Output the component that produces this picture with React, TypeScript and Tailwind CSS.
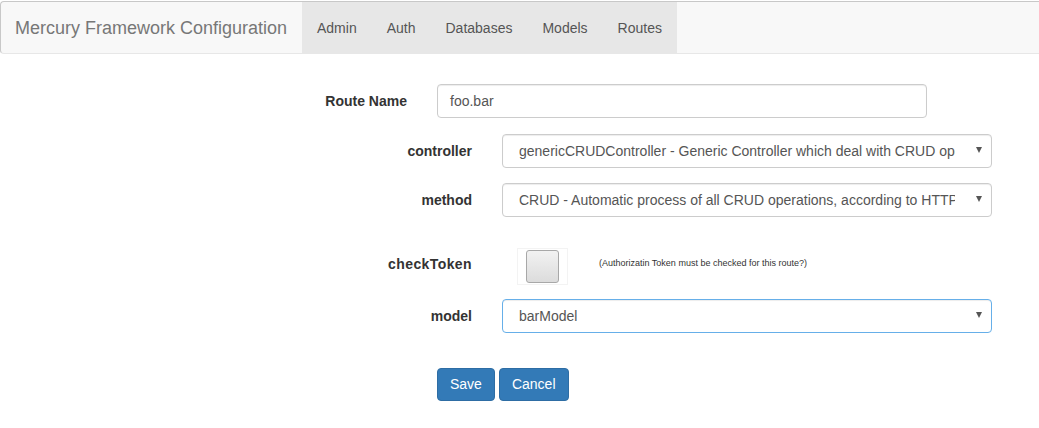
import type { ReactNode } from "react";

const navItems = ["Admin", "Auth", "Databases", "Models", "Routes"];

const controlBase =
  "h-[34px] w-[490px] rounded-[4px] border bg-white text-[14px] text-[#555] shadow-[inset_0_1px_1px_rgba(0,0,0,0.075)]";

function Label({ width, children, spaced }: { width: string; children: ReactNode; spaced?: boolean }) {
  return (
    <label
      className={`${width} shrink-0 pr-[30px] text-right text-[14px] font-bold text-[#333] ${spaced ? "pb-[5px] tracking-[0.4px]" : ""}`}
    >
      {children}
    </label>
  );
}

function FakeSelect({ value, focused }: { value: string; focused?: boolean }) {
  return (
    <div
      className={`${controlBase} relative flex items-center pl-[16px] pr-[36px] ${
        focused
          ? "border-[#66afe9] shadow-[inset_0_1px_1px_rgba(0,0,0,0.075),0_0_8px_rgba(102,175,233,0.6)]"
          : "border-[#ccc]"
      }`}
    >
      <span className="overflow-hidden whitespace-nowrap">{value}</span>
      <span className="absolute right-[9px] top-[12px] h-0 w-0 border-x-[3.5px] border-t-[6px] border-x-transparent border-t-[#555]" />
    </div>
  );
}

export default function App() {
  return (
    <div className="h-[428px] w-[1039px] overflow-hidden bg-white font-['Liberation_Sans',Arial,sans-serif]">
      {/* navbar */}
      <div className="pt-px">
        <nav className="-mr-2 flex h-[53px] rounded-l-[4px] border border-r-0 border-[#c8c8c8] border-b-[#e7e7e7] bg-[#f8f8f8]">
          <div className="flex w-[301px] items-center pl-[14px] pt-px text-[18px] text-[#777]">
            Mercury Framework Configuration
          </div>
          <ul className="flex bg-[#e7e7e7]">
            {navItems.map((item) => (
              <li key={item} className="flex items-center px-[15px] pt-[2px] text-[14px] text-[#555]">
                {item}
              </li>
            ))}
          </ul>
        </nav>
      </div>

      {/* form */}
      <form className="pt-[30px]">
        <div className="flex items-center">
          <Label width="w-[437px]">Route Name</Label>
          <div className={`${controlBase} flex items-center border-[#ccc] px-[12px]`}>foo.bar</div>
        </div>

        <div className="mt-[16px] flex items-center">
          <Label width="w-[502px]">controller</Label>
          <FakeSelect value="genericCRUDController - Generic Controller which deal with CRUD operations" />
        </div>

        <div className="mt-[15px] flex items-center">
          <Label width="w-[502px]">method</Label>
          <FakeSelect value="CRUD - Automatic process of all CRUD operations, according to HTTP method" />
        </div>

        <div className="mt-[31px] flex items-center">
          <Label width="w-[502px]" spaced>
            checkToken
          </Label>
          <div className="ml-[15px] flex h-[37px] w-[51px] shrink-0 items-center justify-center border border-[#f3f3f3]">
            <div className="h-[33px] w-[33px] rounded-[3px] border border-[#a8a8a8] bg-gradient-to-b from-[#f2f2f2] to-[#dcdcdc]" />
          </div>
          <span className="ml-[31px] pb-[5px] text-[9px] text-[#333]">
            (Authorizatin Token must be checked for this route?)
          </span>
        </div>

        <div className="mt-[14px] flex items-center">
          <Label width="w-[502px]">model</Label>
          <FakeSelect value="barModel" focused />
        </div>

        <div className="mt-[35px] flex gap-[4px] pl-[437px]">
          <button
            type="button"
            className="h-[33px] rounded-[4px] border border-[#2e6da4] bg-[#337ab7] px-[12px] text-[14px] text-white"
          >
            Save
          </button>
          <button
            type="button"
            className="h-[33px] rounded-[4px] border border-[#2e6da4] bg-[#337ab7] px-[12px] text-[14px] text-white"
          >
            Cancel
          </button>
        </div>
      </form>
    </div>
  );
}
